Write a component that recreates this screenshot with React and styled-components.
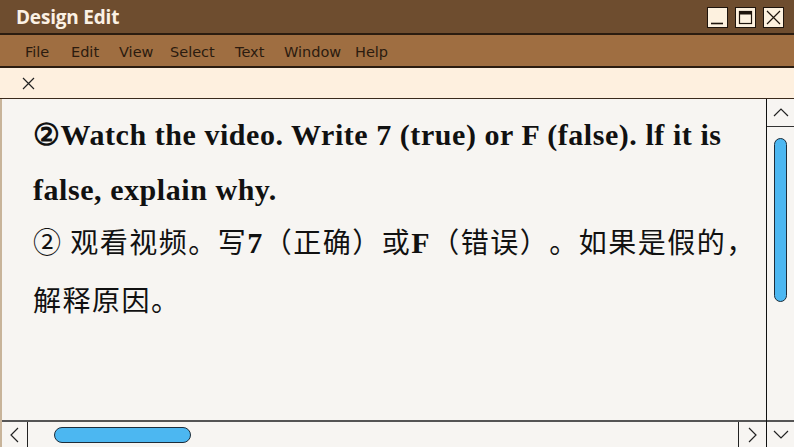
import styled, { createGlobalStyle } from "styled-components";

const Global = createGlobalStyle`
  html, body { margin: 0; padding: 0; }
  body { width: 794px; height: 447px; overflow: hidden; background: #f7f5f2; }
  #root { height: 447px; }
`;

const Window = styled.div`
  width: 794px;
  height: 447px;
  display: flex;
  flex-direction: column;
  background: #f7f5f2;
  overflow: hidden;
`;

const TitleBar = styled.div`
  height: 35px;
  flex: none;
  display: flex;
  align-items: center;
  justify-content: space-between;
  padding: 0 10px 0 16px;
  background: #6e4d2f;
  border-bottom: 2px solid #2a1c10;
  box-sizing: border-box;
`;

const Title = styled.div`
  font-family: "Open Sans", "DejaVu Sans", sans-serif;
  font-weight: 700;
  font-size: 19px;
  color: #fbf1e4;
  letter-spacing: -0.2px;
`;

const Controls = styled.div`
  display: flex;
  gap: 7px;
  padding-top: 1px;
`;

const CtrlButton = styled.button`
  width: 21px;
  height: 21px;
  padding: 0;
  border: 1px solid #1e140c;
  background: #fdf1df;
  display: flex;
  align-items: center;
  justify-content: center;
`;

const MenuBar = styled.div`
  height: 33px;
  flex: none;
  display: flex;
  align-items: center;
  padding-left: 25px;
  background: #9f6e41;
  border-bottom: 2px solid #2a1c10;
  box-sizing: border-box;
`;

const MenuItem = styled.span`
  font-family: "DejaVu Sans", sans-serif;
  font-size: 14.5px;
  color: #2b1b0f;
  width: ${(p) => p.w}px;
  padding-top: 3px;
`;

const TabBar = styled.div`
  height: 31px;
  flex: none;
  display: flex;
  align-items: center;
  padding-left: 22px;
  background: #fef0df;
  border-bottom: 1px solid #3a2a1c;
  box-sizing: border-box;
`;

const Body = styled.div`
  flex: 1;
  display: flex;
  min-height: 0;
  border-left: 2px solid #c8b49a;
`;

const MainColumn = styled.div`
  flex: 1;
  display: flex;
  flex-direction: column;
  min-width: 0;
`;

const Content = styled.div`
  flex: 1;
  padding: 8px 0 0 31px;
  overflow: hidden;
`;

const EnLine = styled.p`
  margin: 0;
  font-family: "Liberation Serif", "DejaVu Serif", serif;
  font-weight: 700;
  font-size: 30px;
  letter-spacing: 0.55px;
  line-height: 55px;
  color: #111;
  white-space: nowrap;
`;

const CnBlock = styled.div`
  margin-top: -4px;
`;

const CnLine = styled.p`
  margin: 0;
  font-family: "Noto Sans CJK SC", sans-serif;
  font-size: 28px;
  letter-spacing: 1.5px;
  text-spacing-trim: space-all;
  line-height: 56px;
  color: #111;
  white-space: nowrap;
  b {
    font-family: "Liberation Serif", serif;
    font-weight: 700;
    font-size: 30px;
  }
`;

const HScroll = styled.div`
  height: 27px;
  flex: none;
  display: flex;
  border-top: 2px solid #555;
  box-sizing: border-box;
`;

const ArrowBox = styled.div`
  width: ${(p) => (p.side === "left" ? 26 : 28)}px;
  flex: none;
  display: flex;
  align-items: center;
  justify-content: center;
  box-sizing: border-box;
  ${(p) => p.side === "left" && "border-right: 1px solid #222;"}
  ${(p) => p.side === "right" && "border-left: 1px solid #222;"}
`;

const HTrack = styled.div`
  flex: 1;
  display: flex;
  align-items: center;
  padding-left: 26px;
`;

const HThumb = styled.div`
  width: 137px;
  height: 16px;
  border-radius: 8px;
  background: #4cb7f1;
  border: 1px solid #1d2d3a;
  box-sizing: border-box;
`;

const VScroll = styled.div`
  width: 27px;
  flex: none;
  display: flex;
  flex-direction: column;
  border-left: 1px solid #111;
`;

const VArrow = styled.div`
  height: ${(p) => (p.bottom ? 27 : 28)}px;
  flex: none;
  display: flex;
  align-items: center;
  justify-content: center;
  box-sizing: border-box;
  ${(p) => (p.bottom ? "border-top: 2px solid #555;" : "border-bottom: 1px solid #333;")}
`;

const VTrack = styled.div`
  flex: 1;
  padding: 11px 0 0 7px;
`;

const VThumb = styled.div`
  width: 13px;
  height: 164px;
  border-radius: 7px;
  background: #4cb7f1;
  border: 1px solid #1d2d3a;
  box-sizing: border-box;
`;

const Chevron = ({ dir }) => {
  const paths = {
    up: "M2 10 L9 3 L16 10",
    down: "M2 3 L9 10 L16 3",
    left: "M10 2 L3 9 L10 16",
    right: "M3 2 L10 9 L3 16",
  };
  const vertical = dir === "up" || dir === "down";
  return (
    <svg width={vertical ? 18 : 13} height={vertical ? 13 : 18} viewBox={vertical ? "0 0 18 13" : "0 0 13 18"}>
      <path d={paths[dir]} fill="none" stroke="#222" strokeWidth="1.2" />
    </svg>
  );
};

const menus = [
  ["File", 46],
  ["Edit", 48],
  ["View", 51],
  ["Select", 65],
  ["Text", 49],
  ["Window", 71],
  ["Help", 40],
];

export default function App() {
  return (
    <>
      <Global />
      <Window>
        <TitleBar>
          <Title>Design Edit</Title>
          <Controls>
            <CtrlButton aria-label="minimize">
              <svg width="19" height="19" viewBox="0 0 19 19">
                <path d="M3 15.5 H15" stroke="#1e140c" strokeWidth="1.6" />
              </svg>
            </CtrlButton>
            <CtrlButton aria-label="maximize">
              <svg width="19" height="19" viewBox="0 0 19 19">
                <rect x="3.5" y="3.5" width="12" height="12" fill="none" stroke="#1e140c" strokeWidth="1.2" />
                <rect x="3.5" y="3.5" width="12" height="3" fill="#1e140c" />
              </svg>
            </CtrlButton>
            <CtrlButton aria-label="close">
              <svg width="19" height="19" viewBox="0 0 19 19">
                <path d="M3 3 L16 16 M16 3 L3 16" stroke="#1e140c" strokeWidth="1.2" />
              </svg>
            </CtrlButton>
          </Controls>
        </TitleBar>
        <MenuBar>
          {menus.map(([m, w]) => (
            <MenuItem key={m} w={w}>{m}</MenuItem>
          ))}
        </MenuBar>
        <TabBar>
          <svg width="13" height="13" viewBox="0 0 13 13">
            <path d="M1 1 L12 12 M12 1 L1 12" stroke="#222" strokeWidth="1.2" />
          </svg>
        </TabBar>
        <Body>
          <MainColumn>
            <Content>
              <EnLine>②Watch the video. Write 7 (true) or F (false). lf it is</EnLine>
              <EnLine>false, explain why.</EnLine>
              <CnBlock>
                <CnLine>
                  ② 观看视频。写<b>7</b>（正确）或<b>F</b>（错误）。如果是假的，
                </CnLine>
                <CnLine>解释原因。</CnLine>
              </CnBlock>
            </Content>
            <HScroll>
              <ArrowBox side="left"><Chevron dir="left" /></ArrowBox>
              <HTrack><HThumb /></HTrack>
              <ArrowBox side="right"><Chevron dir="right" /></ArrowBox>
            </HScroll>
          </MainColumn>
          <VScroll>
            <VArrow><Chevron dir="up" /></VArrow>
            <VTrack><VThumb /></VTrack>
            <VArrow bottom><Chevron dir="down" /></VArrow>
          </VScroll>
        </Body>
      </Window>
    </>
  );
}
